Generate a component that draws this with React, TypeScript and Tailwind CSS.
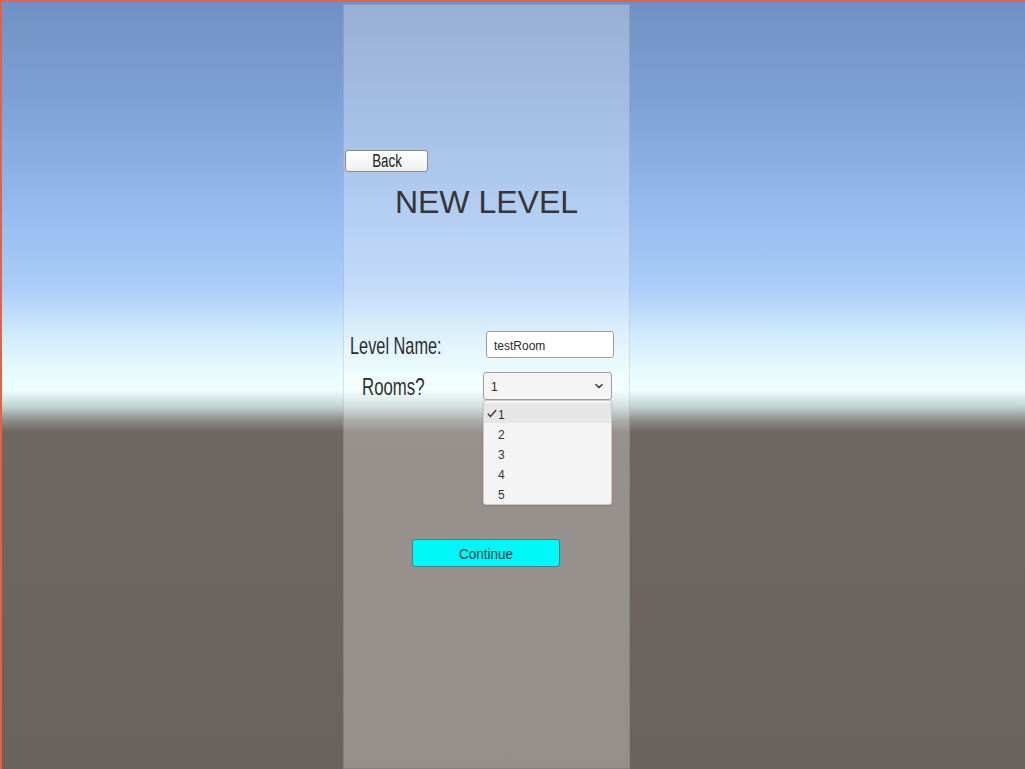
import React from 'react'

const rooms = ['1', '2', '3', '4', '5']

export default function App() {
  return (
    <div
      className="relative w-[1025px] h-[769px] overflow-hidden border-t-2 border-l-2 border-[#e0614c] font-['Liberation_Sans',Arial,sans-serif] bg-[linear-gradient(to_bottom,#6f90c2_0px,#7ea1d5_100px,#93b8ec_200px,#aacdf8_285px,#d2ecfc_335px,#e8fcfd_372px,#effefe_388px,#c4d6d6_404px,#8e8e8b_418px,#6e6661_430px,#6a625d_769px)]"
    >
      {/* center panel */}
      <div className="ml-[341px] mt-[2px] w-[287px] h-[765px] bg-white/[0.29] border border-black/10 flex flex-col pt-[145px]">
        <button className="ml-[1px] self-start w-[83px] h-[22px] rounded-[3px] border border-[#8a8a8a] bg-[linear-gradient(to_bottom,#ffffff,#efefef)] flex items-center justify-center overflow-hidden">
          <span className="inline-block text-[18px] leading-none text-[#222] scale-x-[0.74] translate-x-[1px]">Back</span>
        </button>

        <div className="mt-[14px] h-[32px] leading-[32px] text-[32px] text-center text-[#353535] whitespace-nowrap">
          NEW LEVEL
        </div>

        {/* level name row */}
        <div className="mt-[113px] flex items-center h-[27px]">
          <div className="w-[142px] pl-[6px] whitespace-nowrap">
            <span className="inline-block origin-left scale-x-[0.68] translate-y-[2px] text-[24px] leading-[27px] text-[#2e2e2e]">
              Level Name:
            </span>
          </div>
          <div className="w-[128px] h-[27px] rounded-[3px] border border-[#9c9c9c] bg-white flex items-center pl-[7px]">
            <span className="text-[12px] text-[#2a2a2a] translate-y-[1px]">testRoom</span>
          </div>
        </div>

        {/* rooms row */}
        <div className="mt-[14px] flex items-center h-[28px]">
          <div className="w-[139px] pl-[18px] whitespace-nowrap">
            <span className="inline-block origin-left scale-x-[0.7] translate-y-[1px] text-[24px] leading-[28px] text-[#2e2e2e]">
              Rooms?
            </span>
          </div>
          <div className="relative w-[129px] h-[28px]">
            <div className="w-full h-full rounded-[3px] border border-[#9c9c9c] bg-[#f5f5f5] flex items-center pl-[7px] pr-[6px]">
              <span className="text-[12px] text-[#2a2a2a] flex-1 translate-y-[1px]">1</span>
              <svg width="10" height="6" viewBox="0 0 10 6" className="mr-[1px]">
                <path d="M1.5 1.2 L5 4.6 L8.5 1.2" fill="none" stroke="#333" strokeWidth="1.4" />
              </svg>
            </div>
            <div className="absolute left-0 top-full w-[129px] h-[105px] rounded-[3px] bg-[#f4f4f4] border border-[#b8b8b8]/70 shadow-[0_1px_2px_rgba(0,0,0,0.15)] pt-[2px]">
              {rooms.map((r, i) => (
                <div
                  key={r}
                  className={
                    'h-[20px] flex items-center text-[12px] text-[#333] ' +
                    (i === 0 ? 'bg-[#e6e6e6]' : '')
                  }
                >
                  <div className="w-[14px] flex justify-start pl-[3px]">
                    {i === 0 && (
                      <svg width="10" height="9" viewBox="0 0 10 9">
                        <path d="M0.8 4.8 L3.4 7.5 L9.2 1" fill="none" stroke="#333" strokeWidth="1.3" />
                      </svg>
                    )}
                  </div>
                  <span className="translate-y-[2px]">{r}</span>
                </div>
              ))}
            </div>
          </div>
        </div>

        <button className="mt-[139px] ml-[68px] w-[148px] h-[28px] rounded-[3px] border border-[#2f8a8a] bg-[#00f7f7] flex items-center justify-center">
          <span className="inline-block text-[15px] leading-none text-[#1f3b3b] scale-x-[0.9]">Continue</span>
        </button>
      </div>
    </div>
  )
}
